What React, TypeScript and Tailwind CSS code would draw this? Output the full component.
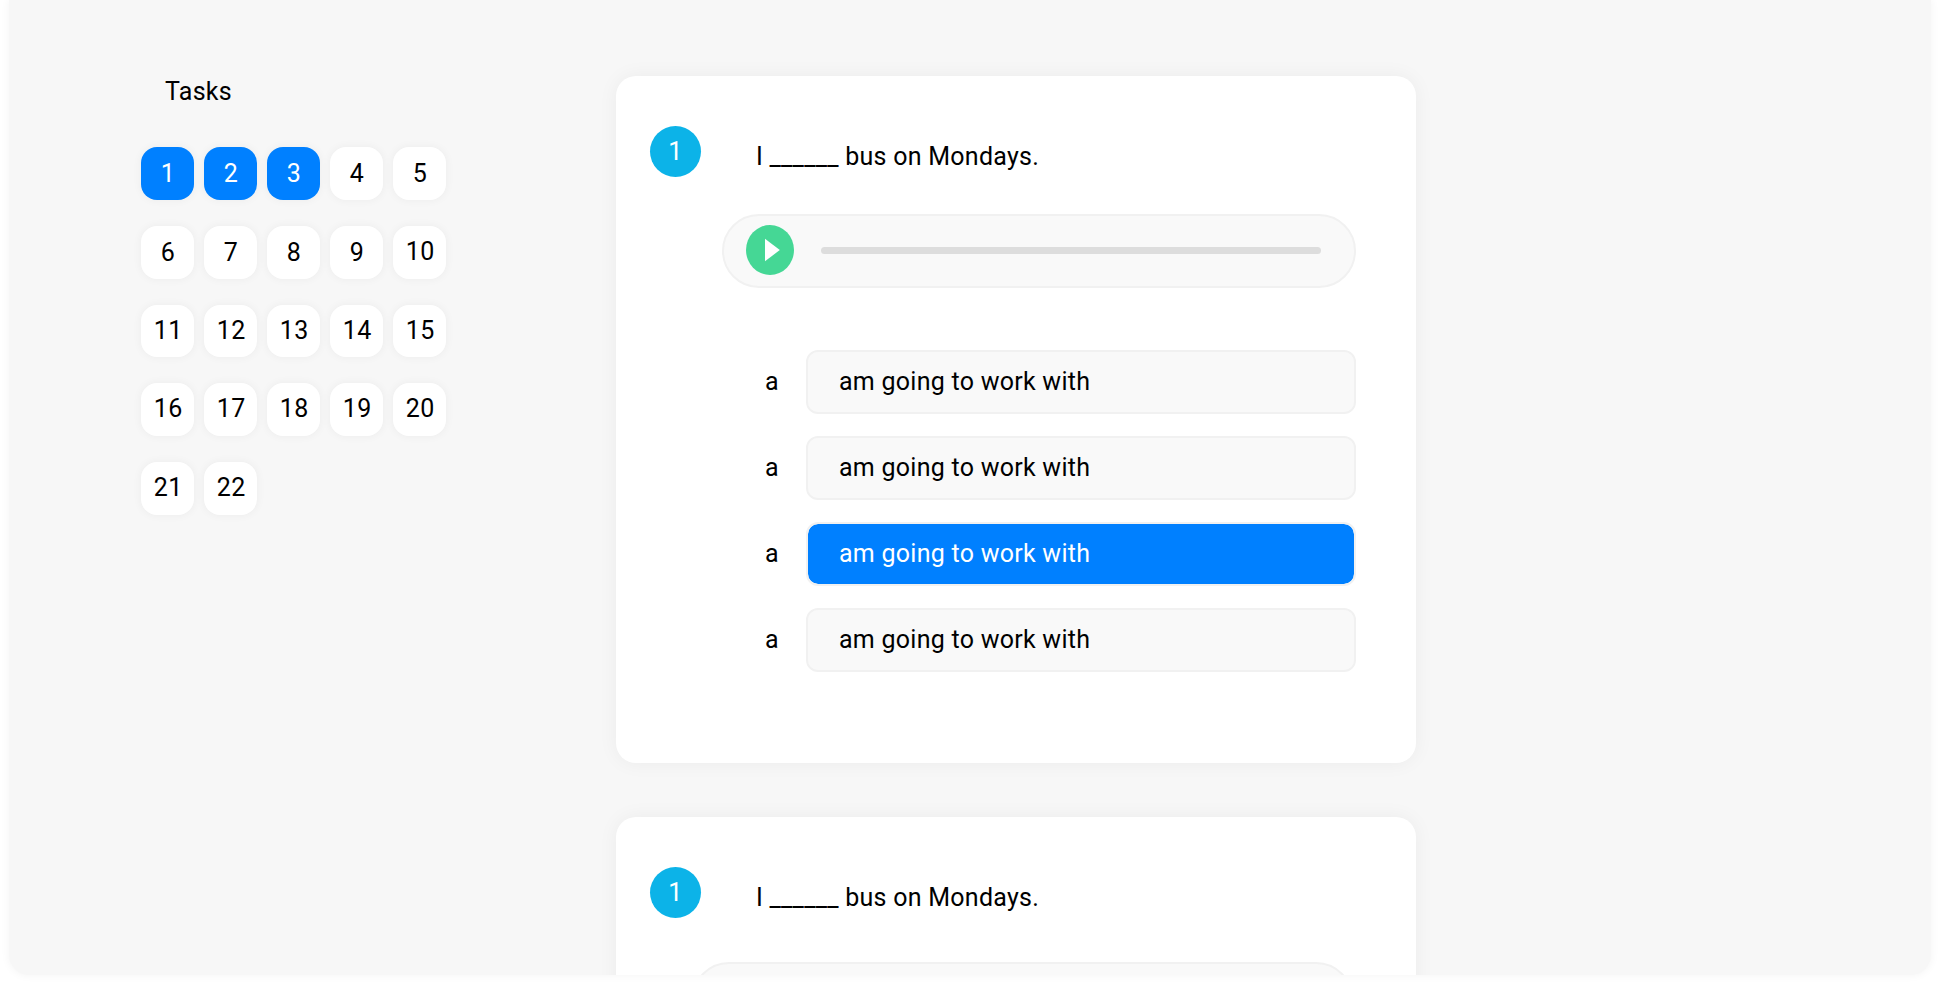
const tasks = Array.from({ length: 22 }, (_, i) => i + 1);
const answered = 3;

type Option = { letter: string; text: string; selected: boolean };

const options: Option[] = [
  { letter: "a", text: "am going to work with", selected: false },
  { letter: "a", text: "am going to work with", selected: false },
  { letter: "a", text: "am going to work with", selected: true },
  { letter: "a", text: "am going to work with", selected: false },
];

function TaskButton({ n }: { n: number }) {
  return (
    <button
      className={`flex h-[52.7px] w-[52.7px] items-center justify-center rounded-2xl leading-none shadow-[0_0_10px_rgba(0,0,0,0.05)] ${
        n <= answered ? "bg-[#0080ff] text-white" : "bg-white text-black"
      } ${n < 10 ? "pl-px tracking-normal" : "pb-[2px] pl-[2px] tracking-[0.6px]"}`}
    >
      {n}
    </button>
  );
}

function Player({ className }: { className: string }) {
  return (
    <div
      className={`flex shrink-0 items-center rounded-[37px] border-2 border-[#f1f1f1] bg-[#f9f9f9] pl-[22px] pr-[33px] ${className}`}
    >
      <button className="-mt-[2px] h-[50px] w-12 shrink-0" aria-label="Play">
        <svg viewBox="0 0 48 50" width="48" height="50">
          <ellipse cx="24" cy="25" rx="24" ry="25" fill="#45d795" />
          <path d="M19 13.8 L33.8 25 L19 36.3 Z" fill="#fff" />
        </svg>
      </button>
      <div className="-mt-px ml-[27px] h-[7px] grow rounded-full bg-[#dddddd]" />
    </div>
  );
}

function QuestionCard({ playerClass, options }: { playerClass: string; options: Option[] }) {
  return (
    <section className="flex h-[687px] w-[800px] shrink-0 flex-col rounded-[20px] bg-white shadow-[0_0_20px_rgba(0,0,0,0.05)]">
      <div className="flex h-[138px] shrink-0 items-start pl-[34px] pt-[50px]">
        <span className="flex h-[51px] w-[51px] items-center justify-center rounded-full bg-[#0cb3e8] pb-px leading-none text-white">
          1
        </span>
        <p className="ml-[55px] mt-[15px] leading-8">I ______ bus on Mondays.</p>
      </div>
      <Player className={playerClass} />
      <ul className="mt-[62px] flex flex-col gap-[22px] pl-[149px] pr-[60px]">
        {options.map((o, i) => (
          <li key={i} className="flex items-center">
            <span className="w-[41px] leading-8">{o.letter}</span>
            <div
              className={`flex h-16 grow items-center rounded-xl border-2 border-[#f1f1f1] bg-clip-padding pl-[31px] leading-8 ${
                o.selected ? "bg-[#0080ff] text-white" : "bg-[#f9f9f9]"
              }`}
            >
              {o.text}
            </div>
          </li>
        ))}
      </ul>
    </section>
  );
}

export default function App() {
  return (
    <div className="h-[984px] overflow-hidden bg-white px-[9px] font-['Roboto',sans-serif] text-[25px] tracking-[0.26px] text-black">
      <div className="h-[975px] rounded-b-[20px] bg-[#f7f7f7] shadow-[0_0_10px_rgba(0,0,0,0.05)]">
        <main className="flex h-full items-start overflow-hidden rounded-b-[20px] pl-[132px]">
          <aside className="w-[475px] pt-[76px]">
            <h1 className="h-[71px] pl-6 leading-8">Tasks</h1>
            <div className="grid w-max grid-cols-5 gap-x-[10.3px] gap-y-[26.15px]">
              {tasks.map((n) => (
                <TaskButton key={n} n={n} />
              ))}
            </div>
          </aside>
          <div className="flex flex-col gap-[54px] pt-[76px]">
            <QuestionCard playerClass="ml-[106px] mr-[60px] h-[74px]" options={options} />
            <QuestionCard playerClass="mt-[7px] ml-[76px] mr-[63px] h-[88px]" options={[]} />
          </div>
        </main>
      </div>
    </div>
  );
}
